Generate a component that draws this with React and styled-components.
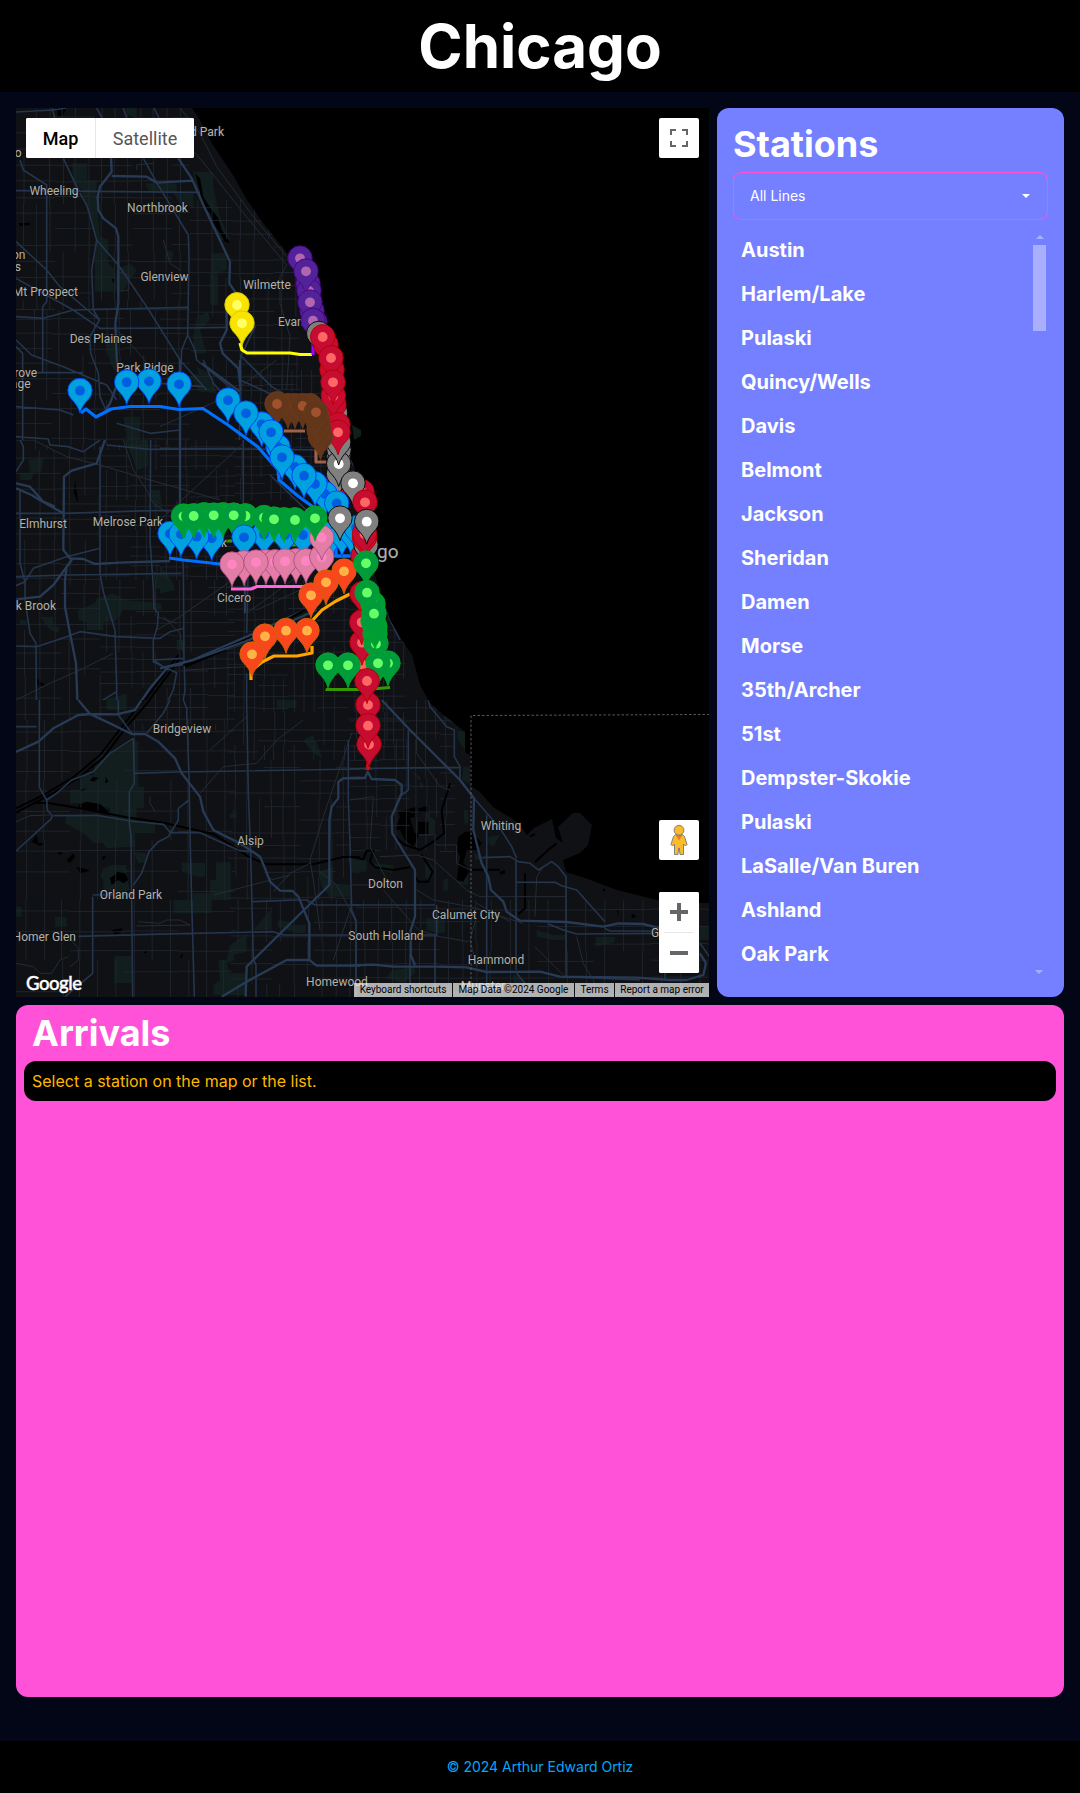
import React from "react";
import styled, { createGlobalStyle } from "styled-components";

const GlobalStyle = createGlobalStyle`
  *, *::before, *::after { box-sizing: border-box; }
  body { margin: 0; background: #020617; color: #fff; font-family: Inter, "Liberation Sans", sans-serif; }
  h1, h2, ul { margin: 0; padding: 0; }
`;

const Page = styled.div`
  display: flex;
  flex-direction: column;
  min-height: 1793px;
`;
const Header = styled.header`
  display: flex;
  justify-content: center;
  padding: 16px;
  background: #000;
`;
const PageTitle = styled.h1`
  font-size: 60px;
  line-height: 60px;
  font-weight: 700;
`;
const Main = styled.main`
  display: grid;
  grid-template-columns: 693px 1fr;
  grid-template-rows: 889px 692px;
  gap: 8px;
  padding: 16px;
  flex: 1;
`;
const Footer = styled.footer`
  padding: 16px;
  background: #000;
  color: #00a8ff;
  font-size: 14px;
  line-height: 20px;
  text-align: center;
`;
const PanelTitle = styled.h2`
  font-size: 36px;
  line-height: 40px;
  font-weight: 700;
`;

/* Stations */
const StationsPanel = styled.section`
  display: flex;
  flex-direction: column;
  gap: 8px;
  padding: 16px;
  border-radius: 12px;
  background: #7480ff;
`;
const Select = styled.button`
  display: flex;
  align-items: center;
  justify-content: space-between;
  height: 48px;
  padding: 0 17px 0 16px;
  border: 1px solid #ff52d9;
  border-radius: 8px;
  background: transparent;
  color: #fff;
  font: 400 14px/28px Inter, sans-serif;
`;
const Caret = styled.span`
  border: 4px solid transparent;
  border-top-color: #fff;
  border-bottom: 0;
`;
const ListArea = styled.div`
  display: flex;
  flex: 1;
  overflow: hidden;
`;
const StationList = styled.ul`
  flex: 1;
  list-style: none;
`;
const StationItem = styled.li`
  padding: 8px;
  font-size: 20px;
  line-height: 28px;
  font-weight: 700;
`;
const Scrollbar = styled.div`
  display: flex;
  flex-direction: column;
  justify-content: space-between;
  width: 13px;
  margin-right: 2px;
`;
const ScrollArrow = styled.span`
  display: flex;
  align-items: center;
  justify-content: center;
  height: 17px;
  transform: ${(p) => (p.$down ? "rotate(180deg)" : "none")};
  &::before {
    content: "";
    border: 4px solid transparent;
    border-bottom-color: #a8afff;
    border-top: 0;
  }
`;
const Thumb = styled.div`
  height: 86px;
  margin-bottom: auto;
  background: #a8afff;
`;

/* Arrivals */
const ArrivalsPanel = styled.section`
  grid-column: 1 / -1;
  display: flex;
  flex-direction: column;
  gap: 8px;
  padding: 8px;
  border-radius: 12px;
  background: #ff52d9;
  & > h2 { padding-left: 8px; }
`;
const Notice = styled.div`
  padding: 8px;
  border-radius: 12px;
  background: #000;
  color: #ffb800;
  font-size: 16px;
  line-height: 24px;
`;

/* Map */
const MapPanel = styled.section`
  position: relative;
  overflow: hidden;
  background: #000;
  font-family: Roboto, "Liberation Sans", sans-serif;
`;
const MapCanvas = styled.svg`
  display: block;
  width: 100%;
  height: 100%;
`;
const MapTypes = styled.div`
  position: absolute;
  left: 10px;
  top: 10px;
  display: flex;
  height: 40px;
  border-radius: 2px;
  overflow: hidden;
  background: #fff;
`;
const MapType = styled.button`
  width: ${(p) => p.$width}px;
  padding: 0;
  border: 0;
  border-left: ${(p) => (p.$active ? 0 : "1px solid #e6e6e6")};
  background: #fff;
  color: ${(p) => (p.$active ? "#000" : "#565656")};
  font: ${(p) => (p.$active ? 500 : 400)} 18px Roboto, sans-serif;
`;
const ControlColumn = styled.div`
  position: absolute;
  top: 10px;
  right: 10px;
  bottom: 24px;
  display: flex;
  flex-direction: column;
`;
const Control = styled.button`
  display: flex;
  align-items: center;
  justify-content: center;
  width: 40px;
  height: 40px;
  padding: 0;
  border: 0;
  border-radius: 2px;
  background: #fff;
  margin-top: ${(p) => (p.$bottom ? "auto" : 0)};
`;
const ZoomBox = styled.div`
  display: flex;
  flex-direction: column;
  align-items: center;
  margin-top: 32px;
  border-radius: 2px;
  background: #fff;
`;
const ZoomRule = styled.span`
  width: 30px;
  height: 1px;
  background: #e6e6e6;
`;
const Attribution = styled.div`
  position: absolute;
  right: 0;
  bottom: 0;
  display: flex;
  gap: 1px;
`;
const Credit = styled.span`
  width: ${(p) => p.$width}px;
  height: 14px;
  background: rgba(245, 245, 245, 0.7);
  color: #000;
  font-size: 10px;
  line-height: 14px;
  text-align: center;
  white-space: nowrap;
`;

const stations = [
  "Austin", "Harlem/Lake", "Pulaski", "Quincy/Wells", "Davis", "Belmont", "Jackson", "Sheridan", "Damen",
  "Morse", "35th/Archer", "51st", "Dempster-Skokie", "Pulaski", "LaSalle/Van Buren", "Ashland", "Oak Park",
];

const pinColors = {
  red: ["#c60c30", "#b50000", "#ff6666"],
  blue: ["#00a1de", "#003cff", "#005fe0"],
  brown: ["#62361b", "#6e3a17", "#a0522d"],
  green: ["#009b3a", "#00a81c", "#66ff66"],
  orange: ["#f9461c", "#c46b00", "#ffb347"],
  purple: ["#522398", "#4b0082", "#b266b2"],
  pink: ["#e27ea6", "#b04c88", "#ff85c2"],
  yellow: ["#f9e300", "#d9cb00", "#ffff66"],
  gray: ["#808080", "#000000", "#ffffff"],
};

// Pins per group, listed from back to front.
const pins = [
  ["purple", [[300, 258.3], [308, 284], [309, 291], [306, 271.3], [312, 311], [310, 302.3], [315, 322], [313, 320.7]]],
  ["yellow", [[237, 305], [242, 323.3]]],
  ["gray", [[318.7, 333.7], [335.5, 413], [338, 475], [338.7, 464], [338.7, 455]]],
  ["red", [[326, 345], [322.7, 337], [332, 370], [334, 405], [333.3, 396], [331, 358], [333, 382.3], [338, 425], [334, 488]]],
  ["gray", [[339, 450], [338.5, 474], [338.7, 464], [338.7, 442.5]]],
  ["red", [[338, 432.3]]],
  ["brown", [[288, 406], [295, 406], [310, 406], [302.7, 406], [277, 404], [320.5, 437], [319, 430], [318, 421], [316, 412.3]]],
  ["blue", [[80, 390.7], [149, 381.3], [126.7, 382.3], [179, 384.3], [228, 400.3], [261.7, 424.3], [246, 413.3], [278, 447], [271, 432.3], [295, 467], [282, 457.3], [325, 494], [315, 484], [304, 475.7], [333, 533], [342, 534], [351, 532], [356, 528], [336.7, 503.3], [211.7, 538.3], [196.7, 536.7], [170, 533.7], [181, 534.3], [285, 535], [303, 535], [264, 534.3]]],
  ["green", [[183.5, 516.3], [204, 515], [223, 515], [213.7, 515.3], [193.7, 516], [245.5, 516], [233.7, 515.3], [264, 517.7], [284, 520], [274, 519.3], [295, 520]]],
  ["blue", [[244, 537.3]]],
  ["pink", [[244, 563], [266, 562], [275, 562], [296, 561], [232, 564.3], [256, 562.3], [285, 561.3], [306, 561], [321.7, 557], [321.7, 537.7]]],
  ["green", [[315, 518.3]]],
  ["red", [[362, 492], [363, 556]]],
  ["gray", [[353, 483.3], [366, 545]]],
  ["red", [[364.5, 538], [364.5, 534], [365, 502.3]]],
  ["gray", [[366.7, 521.7], [340, 518.3]]],
  ["orange", [[344, 571.3], [326, 582.3], [311, 595.3], [307, 630.7], [286, 630.7], [265, 636.3], [252, 654.3]]],
  ["red", [[362, 594], [363, 665], [362, 642.7], [361.7, 622.3]]],
  ["green", [[375, 634], [376, 643.7], [375, 627], [373, 621], [373, 604], [367, 592.7], [374, 613.7], [366, 563.3], [328, 665.3], [348, 665.3], [388, 663.3], [378, 663.3]]],
  ["red", [[369, 744.5], [368, 705], [368, 725.7], [367, 681]]],
];

const labels = [
  ["d Park", 224, 135.5, "end"], ["o", 21.5, 157, "end"], ["Wheeling", 54, 195], ["Northbrook", 157.5, 212],
  ["Glenview", 164.5, 281], ["Wilmette", 267, 289], ["Evanston", 278, 326, "start"], ["Arlington", 25.5, 259, "end"],
  ["Heights", 21, 271, "end"], ["Mt Prospect", 78, 296, "end"], ["Des Plaines", 101, 343], ["Park Ridge", 145, 372],
  ["Elk Grove", 37, 377, "end"], ["Village", 30.5, 388, "end"], ["Elmhurst", 43, 528], ["Melrose Park", 128, 526], ["Oak Park", 227, 547, "end"],
  ["Oak Brook", 56, 610, "end"], ["Cicero", 234, 602], ["Bridgeview", 182, 733], ["Alsip", 250.5, 845], ["Orland Park", 131, 899],
  ["Homer Glen", 76, 941, "end"], ["Whiting", 501, 830], ["Dolton", 385.5, 888], ["Calumet City", 466, 919], ["South Holland", 386, 940],
  ["Hammond", 496, 964], ["Homewood", 337, 986], ["Munster", 483, 990], ["Gary", 651, 937, "start"],
];

// The base map is drawn sheet by sheet, three drawing units to the pixel.
const sheets = [
  {
    at: [0, 90],
    parks: ["M215 220H262V270H290V310L300 440L325 450L325 520L345 540V605H285V500L290 440L262 360L245 300L222 280Z", "M435 280H530V310H450Z", "M580 245H640V290L660 380L690 450L660 450L620 370L590 300Z", "M635 490H680V540L655 550V645H630V560Z", "M520 310H580V355L540 340Z", "M500 480L520 485L515 515L495 505Z", "M590 680L625 665L630 690L600 720L620 790H580V740Z", "M350 540L390 520L410 540L370 600H345Z", "M320 750H350V850L330 820Z", "M590 850L640 880L650 910L600 905L570 860Z", "M370 980H420V1075H385Z", "M380 54H410V85L385 75Z"],
    water: ["M585 250L600 265L610 320L625 345L655 385L665 420L680 440L690 460L675 455L660 430L640 400L630 370L610 345Z", "M55 400L90 398V405L60 408Z", "M335 565L345 570L340 580Z", "M170 54H200L190 75L175 80Z"],
    canals: [],
    majors: ["M333 200L335 245L300 290L293 320L295 360L310 385L348 415L355 440L355 640L346 700L350 800L356 870L330 940L318 960", "M335 258L440 260L470 278L580 272", "M535 205L575 265L610 345L690 515L688 580L722 630M680 640L680 720L660 760L668 790L715 835L722 900"],
    roads: ["M48 66L160 60L200 54", "M157 54L165 90M190 205L230 290L262 350L290 450L355 525L440 650L540 810L620 900", "M290 54L310 90M370 54L380 85M462 54L480 90M430 205L470 278L565 435L567 500L563 735L545 780L541 870L541 1080", "M290 450L275 540L280 660L298 690L270 740L272 790L295 850L300 920L318 960", "M48 455L140 540L180 590L298 690M48 565L220 660L300 715L560 714L680 712", "M48 680L130 685L220 660L562 652", "M48 302L600 307", "M60 210L70 240L140 285L140 635L128 650L128 845", "M48 750L95 795L190 830L320 885L350 930", "M48 770L68 790L68 1080M68 847L250 848", "M563 735L585 780L590 810L700 900", "M720 795L815 890L850 910", "M722 620L765 710L722 800L718 1080", "M48 950L180 960L220 975", "M48 1040L145 1047L150 1060L200 1065L250 1090", "M540 1020L450 1030L350 1000"],
    minor: ["M480 90L600 205L735 375L860 525L840 560L840 640L870 740L860 900", "M540 54L600 130L650 230L760 380L860 500", "M350 545L385 555L385 600L350 605", "M350 720L400 770L450 830L530 850", "M410 240V225L460 220", "M490 450L510 520L540 540"],
  },
  {
    at: [0, 440],
    parks: ["M85 60L130 55L125 95L100 100L95 120H60V100H90Z", "M375 0H445V80L410 90L400 60Z", "M450 150H480L488 210L460 200Z", "M460 395L495 405V450L465 445Z", "M235 510L285 490L290 475L340 460L375 480L485 490V510H370L345 545L310 545V570H260V545L235 540Z", "M60 540H80V555H60ZM120 530L160 530V560H180L175 580L150 570Z", "M310 780L380 760V805L320 810Z", "M530 600H550V630H530ZM840 780H890V810H840Z"],
    water: ["M225 120L235 190L222 160Z", "M110 715L135 735L115 740Z"],
    canals: ["M340 895L420 800L535 645M355 895L430 805L540 655", "M550 682L700 620L800 575L915 510"],
    majors: ["M315 0L290 70L215 92L192 110L190 330L215 360L200 380L195 420V500L208 570L228 670L232 780L255 815L340 850L430 885", "M48 145L95 165L110 175L190 220M48 130L90 140L130 185L165 200", "M190 330L210 355L250 357L285 372L360 368L510 363", "M48 478L120 470L160 435L215 360", "M115 900L160 870L235 825L270 822L350 823L405 810L450 745L505 680L550 672L740 590L915 510"],
    roads: ["M145 0L150 15L205 20L250 35L300 0", "M60 0L70 20V60L48 95", "M48 220L195 220L450 212L620 212M300 20V400L310 455L345 570L350 740V800L390 875", "M452 0L450 300L460 440L462 505L475 520L472 560L460 600L460 665L500 685L530 698L520 750L480 830L430 880", "M540 0V350L550 370L552 660L555 750L550 780L562 820V900", "M320 15L450 28L730 25M730 0V210", "M48 410L200 405L545 400M48 437L75 425L100 385L200 350L300 325M75 425V480L90 580L108 610L110 900", "M60 150V370L75 425M48 618L110 620L200 590L240 575L350 590L480 595L510 575L552 565", "M745 370L740 580M740 700V900M260 810L350 755M505 690L460 660L550 655"],
    minor: ["M370 0L400 90L440 150L460 190L505 220", "M0 0L100 0L200 50L300 75L450 120L660 180", "M48 780L150 730L240 690L340 640", "M470 570L540 530L640 460L740 390", "M490 530L540 580L550 640M470 530L530 550", "M770 510L900 450M555 690L740 680"],
  },
  {
    at: [160, 360],
    parks: ["M110 20L150 40V70L120 60Z", "M560 180L590 205H603V235L580 230L555 210Z", "M0 620L20 640L40 670L45 690L0 700Z"],
    water: [],
    canals: ["M70 915L220 855L320 812L435 750"],
    majors: ["M240 0L240 60M125 10L240 95M60 0V500M255 600V760", "M0 925L100 900L255 845L470 750"],
    roads: ["M0 265L320 268L500 270M0 70L130 80M240 60L340 105M130 0L160 70L300 230L430 350M330 345L470 480M650 640L690 780L720 840", "M550 270L650 420L660 600"],
    minor: ["M0 200L200 110L350 0M0 480L250 250M260 760L480 600M200 870L480 780"],
  },
  {
    at: [0, 700],
    parks: ["M325 165L400 120L415 125V260H432V325H410V370H465V400H405V440L320 445L310 430H280L250 400L195 370L200 345L300 345L330 350V325L250 310H210V270H240V225H280L290 165Z", "M310 505L335 495H380V530L390 570L370 575H310V540L300 530Z", "M400 455L440 460V485L415 490Z", "M545 488H615V530H590L545 515Z", "M648 487H692V600H635V640H520V600H580V580H630V540H648Z", "M760 690L815 625V690ZM835 660L870 665V675H918V700H890L830 680Z", "M690 735L740 700V755L700 765L705 780L680 790L690 820H735V885H640V855L660 840L655 780H680Z", "M343 768H395V850H343ZM165 650H200V680H165Z", "M320 0H380V30H320ZM910 120L940 105L970 180L930 150Z", "M955 515L1000 500L1000 550L1050 555V590H990L965 560Z", "M1040 475H1080V520H1060Z", "M830 0H890V25H830ZM690 340L710 335V355H690ZM48 620H65V650H48Z"],
    water: ["M235 315L260 305L300 312L325 335L320 340L240 325Z", "M330 535L350 520L350 515L375 520L385 540L370 550L355 540L335 555Z", "M270 240L280 230L296 235L280 245ZM318 230L325 245L315 250ZM240 270L260 265L245 275Z", "M200 480L220 460L225 470L210 490ZM230 500L270 510L260 515L240 520Z", "M95 425L110 405L115 430L133 430L120 438ZM170 455L188 458L180 465ZM305 470L320 468L310 480ZM335 690L368 685L360 700L345 705ZM430 758L440 750V760ZM540 770L550 760L545 775Z"],
    canals: ["M48 325L130 285L220 232L300 165L370 75L430 0M48 338L140 290L235 235L310 172L380 80L450 0", "M100 308L150 310L240 325L380 352L490 368L640 402L700 440L745 470L800 493L940 493L1030 471H1080"],
    majors: ["M48 156L115 125L160 85L235 45L270 42L350 43L405 30L425 0", "M235 0L270 42L330 70L395 102L435 102L475 125L525 175L545 220L600 290L610 335L640 390L720 430L780 470L795 505L810 545L840 572L878 573L895 590L928 670V780", "M1080 234L1030 235L1015 245V295L995 320L988 360V555L740 800L737 890", "M665 890L740 845L860 780L928 780L950 797L1080 797"],
    roads: ["M48 453L155 355V345L142 330L140 300L118 262V0M140 300L170 280L215 240L280 215L330 160L400 115", "M160 347L290 346L390 363L490 373L510 397L600 398L720 452L750 455", "M400 115L403 250L388 275V370L393 410L398 890", "M400 220L530 216L1080 207M560 30L567 230L570 400L575 600L583 890", "M740 0L745 280L752 460L760 775L768 795V890", "M235 709L450 703L820 695L850 705L1080 705M278 590V820L195 890M278 585L400 583", "M567 300L535 325V360L505 410L475 425L447 455L425 520L400 555", "M755 605L890 600L920 600L945 615L1080 615M1045 120V300L1050 430L1055 630L1068 660V890", "M48 80H110M440 100L490 40L510 0", "M550 0L562 30M355 0V45L395 100"],
    minor: ["M48 365L90 347L150 345", "M48 790L100 800L120 820L155 820L180 780L205 770M205 710L235 745V780L210 800", "M600 280L670 200L770 190L830 120L910 60M630 150L740 50", "M1055 100L970 350L930 480L940 540L960 690", "M820 575L870 520L930 490M640 585L870 525", "M960 515L1010 555L1050 630L1000 780", "M415 665L480 670L500 660L540 660L570 675L410 678", "M450 290L450 310L465 335"],
  },
  {
    at: [350, 700],
    parks: ["M180 210L225 260L210 265V230Z", "M205 330L240 315V350L255 360V405H230V350Z", "M225 480L250 500V520L240 545L225 530Z", "M275 50L300 50L320 90L345 95V150L325 120L320 80Z", "M340 200L360 200V250L335 240Z", "M280 540L295 535V570L280 575Z", "M330 500H355V555L325 550ZM340 330L355 330V365L345 375Z", "M228 655H285V698H255L230 690Z", "M130 810L195 800V820L160 850L110 835L120 815Z", "M415 410L450 405L430 440L415 430ZM375 460L400 470V480H375Z", "M560 690L610 705H650V720H610L560 710ZM735 710H795V725L740 740Z", "M1050 680H1078V720H1050ZM490 820L530 850H490Z", "M0 480H50V515H0ZM60 490L130 495V520L70 505Z"],
    water: ["M145 335L200 320L195 350L180 355L195 400L210 400L190 440L165 420L150 390L135 390L150 350Z", "M205 325L235 318V340H205ZM205 365H235V402H205Z", "M325 410L345 395H365L395 430L380 450L350 450L340 490L360 510L340 545L320 540L330 470L320 450Z", "M450 515L465 510V520L450 525ZM755 570L765 565V575ZM800 630H805V650ZM845 640L860 650L845 655Z"],
    canals: ["M300 250L288 290L275 330L282 400L250 425L210 450L165 435L128 405", "M0 470L40 478L50 452H70L60 485L75 502L130 510L180 502", "M215 465L248 515L235 545L205 545L195 530", "M365 509H450M525 520V625L505 642", "M555 487L600 445L620 430M540 410L555 402"],
    majors: ["M95 0L180 90L330 240L372 295L370 390L395 490L415 530L423 570L460 605L470 635L510 662L650 666L760 680L805 670L880 672L930 685", "M0 234L45 234L53 215L65 237L135 240L155 255V280L125 350L127 400L195 510V650L182 690V765L195 795", "M0 797L70 794L130 800L260 800L350 802L410 816L570 815L630 830L860 833L960 840L1010 840L1060 825L1068 790L1050 760"],
    roads: ["M235 0L240 20L290 80L313 90V170L330 200V240M0 206L330 202", "M45 210L53 195L65 210M175 90V270L155 285", "M372 295L450 385L485 440L500 475M410 345V840", "M398 473L480 470L505 485L540 490L565 510L605 485L625 500L648 530V830M498 480V810", "M500 546L615 547L635 557L680 570L765 665", "M0 615L255 615M200 705H260V615M255 705V890M0 625L18 665V890M180 765V890", "M595 672L640 690L680 702L940 700M500 820L525 850M765 685L780 693H940M930 650V670M945 690V840M1050 730L1078 770", "M410 816L410 880M640 830L870 840"],
    minor: ["M100 570L205 690L270 710L355 725M90 470L200 465L250 480L350 570L390 590L500 590L650 590", "M200 570L250 600L360 620L520 670M380 610L480 665", "M580 500L560 530L555 650M200 0V160L270 260L300 270", "M255 400V600M205 405H250M0 300L70 290L60 440L120 560", "M555 740L640 825M680 710L700 790L730 840L740 880", "M380 650L360 720L380 800M0 555H100M255 435H320V490L360 510"],
  },
];

const landPath =
  "M16 108H192L200 120L213 145L233 175L247 200L263 223L287 253L300 265L325 340L335 400L345 440L365 500L370 530L377 545L375 575L390 620L402 640L412 655L420 685L430 703L440 712L450 720L465 732V752L470 755V785L480 792L493 807L517 822L527 835L534 828L552 819L556 838L563 843L558 827L573 813H580L592 825L588 845L580 853L563 860L566 872L585 878L617 890L657 900L700 903H709V997H16Z";

// Street grid blocks: x0, y0, x1, y1, column step, row step.
const gridBlocks = [
  [16, 108, 190, 310, 13, 16], [16, 310, 190, 450, 12, 15], [190, 200, 300, 390, 14, 13],
  [235, 370, 345, 500, 10, 9], [100, 440, 235, 580, 10, 10], [16, 450, 100, 720, 15, 15],
  [100, 580, 235, 730, 12, 12], [228, 580, 405, 760, 10, 11], [16, 720, 235, 997, 18, 20],
  [228, 760, 350, 900, 12, 13], [350, 700, 455, 850, 10, 13], [230, 900, 480, 997, 14, 14], [480, 900, 709, 997, 19, 17],
];
const rand = (n) => {
  const v = Math.sin(n * 127.1) * 43758.5453;
  return v - Math.floor(v);
};
const gridPath = gridBlocks
  .map(([x0, y0, x1, y1, dx, dy], b) => {
    let d = "";
    for (let x = x0 + dx / 2, i = 0; x < x1; x += dx, i++) {
      for (let y = y0, k = 0; y < y1; y += dy * 3, k++) {
        const r = rand(b * 91 + i * 7 + k * 3);
        if (r > 0.25) d += `M${(x + r * 2).toFixed(1)} ${y}V${Math.min(y + dy * 3, y1)}`;
      }
    }
    for (let y = y0 + dy / 2, i = 0; y < y1; y += dy, i++) {
      for (let x = x0, k = 0; x < x1; x += dx * 3, k++) {
        const r = rand(b * 57 + i * 13 + k * 5);
        if (r > 0.25) d += `M${x} ${(y + r * 2).toFixed(1)}H${Math.min(x + dx * 3, x1)}`;
      }
    }
    return d;
  })
  .join("");

const routes = [
  ["#0070ff", "M81 413L86 409L96 417L111 409L130 406.500H160L179 409.500L203 408.500L228 425L258 447L278 470L279 480L298 496L320 512L336 540V556H350"],
  ["#0070ff", "M169 558L183 560L220 564M320 556H355"],
  ["#ffff00", "M240 343L242 350L247 353H290L300 354.500H312"],
  ["#a000ff", "M313 342V355"],
  ["#a0604a", "M284 431H305M316 450V462H328"],
  ["#ff66dd", "M231 589H251L257 586.500H315"],
  ["#ffa500", "M251 680V671L262 662L274 656H297L312 653V646M311 622L322 610L336 601L350 594"],
  ["#339900", "M225 541H232M290 545H300M327 691V689.500H365L390 687.500"],
  ["#ff0000", "M368 745V770"],
];

function Pin({ color, x, y }) {
  const [fill, stroke, dot] = pinColors[color];
  return (
    <g transform={`translate(${x} ${y})`}>
      <path
        d="M0 22.500C-1.500 16.500 -5 12.200 -9 8A12.200 12.200 0 1 1 9 8C5 12.200 1.500 16.500 0 22.500Z"
        fill={fill}
        stroke={stroke}
        strokeWidth="0.9"
      />
      <circle r="4.900" fill={dot} />
    </g>
  );
}

function TransitMap() {
  return (
    <MapCanvas viewBox="16 108 693 889">
      <defs>
        <clipPath id="land"><path d={landPath} /></clipPath>
        {sheets.map(({ at }, i) => (
          <clipPath id={`sheet-${i}`} key={i}><rect x={at[0]} y={at[1]} width="370" height={i === 0 ? 350 : i === 1 ? 260 : 340} /></clipPath>
        ))}
      </defs>
      <path d={landPath} fill="#0f1114" />
      <path d="M352 425L361 430V436L354 440Z" fill="#101e1e" />
      <g clipPath="url(#land)" fill="none">
        {sheets.map(({ at, parks, water }, i) => (
          <g key={i} clipPath={`url(#sheet-${i})`}>
            <g transform={`translate(${at[0]} ${at[1]}) scale(0.33333)`}>
              <path d={parks.join("")} fill="#111e1d" />
              <path d={water.join("")} fill="#000" />
            </g>
          </g>
        ))}
        <path d={gridPath} stroke="#20262e" strokeWidth="0.9" />
        {sheets.map(({ at, canals, majors, roads, minor }, i) => (
          <g clipPath={`url(#sheet-${i})`} key={i}>
            <g transform={`translate(${at[0]} ${at[1]}) scale(0.33333)`} strokeLinejoin="round">
              <path d={canals.join("")} stroke="#000" strokeWidth="6" />
              <path d={minor.join("")} stroke="#252c35" strokeWidth="3" />
              <path d={roads.join("")} stroke="#24354d" strokeWidth="4.8" />
              <path d={majors.join("")} stroke="#283b56" strokeWidth="7" />
            </g>
          </g>
        ))}
      </g>
      <path d="M471 997V715.500L709 714.500" fill="none" stroke="#5a5a5a" strokeDasharray="2.500 2" />
      <g fill="none" strokeWidth="3.200" strokeLinejoin="round">
        {routes.map(([stroke, d]) => <path key={d} d={d} stroke={stroke} />)}
      </g>
      <g fill="#b2b2ae" stroke="#111" strokeWidth="1.200" paintOrder="stroke" fontSize="12">
        {labels.map(([name, x, y, anchor = "middle"]) => (
          <text key={name} x={x} y={y} textAnchor={anchor}>{name}</text>
        ))}
        <text x="398.500" y="557.500" textAnchor="end" fontSize="19">go</text>
      </g>
      {pins.map(([color, spots], g) => spots.map(([x, y]) => <Pin key={`${g}-${x}-${y}`} color={color} x={x} y={y} />))}
      <text x="26" y="989.500" fill="#fff" fontFamily="Lato, sans-serif" fontWeight="500" fontSize="18.500" textLength="56" stroke="#fff" strokeWidth="0.4">Google</text>
    </MapCanvas>
  );
}

export default function App() {
  return (
    <Page>
      <GlobalStyle />
      <Header><PageTitle>Chicago</PageTitle></Header>
      <Main>
        <MapPanel>
          <TransitMap />
          <MapTypes>
            <MapType $active $width={69}>Map</MapType>
            <MapType $width={99}>Satellite</MapType>
          </MapTypes>
          <ControlColumn>
            <Control aria-label="Toggle fullscreen">
              <svg width="18" height="18" viewBox="0 0 18 18" fill="#666"><path d="M0 0v6h2V2h4V0zm16 0h-4v2h4v4h2V0zm0 16h-4v2h6v-6h-2zM2 12H0v6h6v-2H2z" /></svg>
            </Control>
            <Control $bottom aria-label="Street View">
              <svg width="18" height="32" viewBox="0 0 18 32" fill="#fbbc2c" stroke="#777" strokeWidth="0.9">
                <path d="M5.500 10.500H12.500L14.500 12.500L17 20.500L15.500 22L13.500 20V30.500H10L9.300 24H8.700L8 30.500H4.500V20L2.500 22L1 20.500L3.500 12.500Z" />
                <path d="M5.500 11H12.500L9 16.500Z" fill="#e37f2c" stroke="none" />
                <circle cx="9" cy="6.200" r="4.900" />
              </svg>
            </Control>
            <ZoomBox>
              <Control aria-label="Zoom in"><svg width="18" height="18" fill="#666"><path d="M7 0h4v7h7v4h-7v7H7v-7H0V7h7z" /></svg></Control>
              <ZoomRule />
              <Control aria-label="Zoom out"><svg width="18" height="18" fill="#666"><path d="M0 7h18v4H0z" /></svg></Control>
            </ZoomBox>
          </ControlColumn>
          <Attribution>
            <Credit $width={98}>Keyboard shortcuts</Credit>
            <Credit $width={121}>Map Data ©2024 Google</Credit>
            <Credit $width={39}>Terms</Credit>
            <Credit $width={94}>Report a map error</Credit>
          </Attribution>
        </MapPanel>
        <StationsPanel>
          <PanelTitle>Stations</PanelTitle>
          <Select>All Lines<Caret /></Select>
          <ListArea>
            <StationList>
              {stations.map((name, i) => <StationItem key={i}>{name}</StationItem>)}
            </StationList>
            <Scrollbar><ScrollArrow /><Thumb /><ScrollArrow $down /></Scrollbar>
          </ListArea>
        </StationsPanel>
        <ArrivalsPanel>
          <PanelTitle>Arrivals</PanelTitle>
          <Notice>Select a station on the map or the list.</Notice>
        </ArrivalsPanel>
      </Main>
      <Footer>© 2024 Arthur Edward Ortiz</Footer>
    </Page>
  );
}
